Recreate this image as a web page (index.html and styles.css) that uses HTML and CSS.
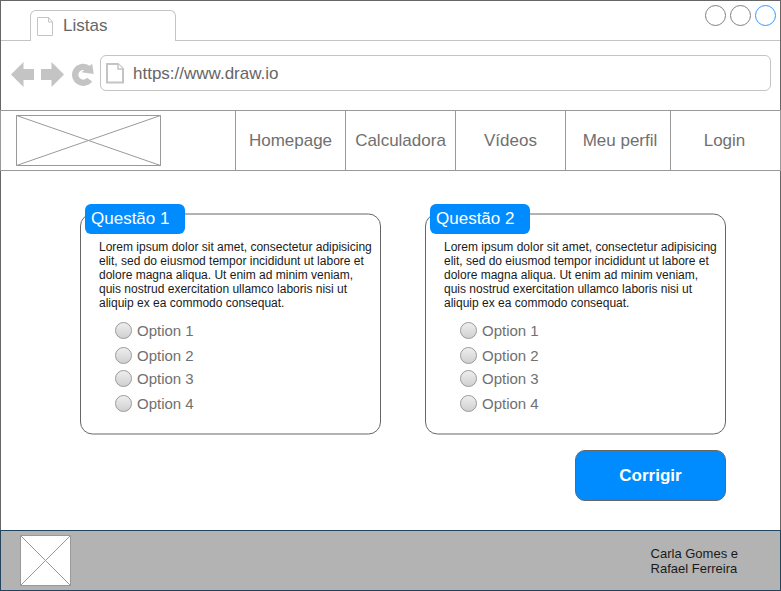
FILE: index.html
```html
<!DOCTYPE html>
<html lang="pt">
<head>
<meta charset="utf-8">
<title>Listas</title>
<link rel="stylesheet" href="styles.css">
</head>
<body>
<div class="window">
  <header class="chrome">
    <div class="tabstrip">
      <div class="tab">
        <svg class="tab-icon" width="17" height="20" viewBox="0 0 17 20" fill="#fff" stroke="#c4c4c4"><path d="M.5 .5h11l4 4.500v13.500h-15zM11.500 .5v4.500h4"/></svg>
        <span>Listas</span>
      </div>
      <div class="controls"><i class="dot"></i><i class="dot"></i><i class="dot active"></i></div>
    </div>
    <div class="toolbar">
      <svg class="arrows" width="86" height="30" viewBox="0 0 86 30" fill="#c4c4c4"><path d="M0 15.500 12.500 3v7H23v11H12.500v7zM53 15.500 40.500 3v7H30v11h10.500v7z"/><path d="M77.500 9.800A8 8 0 1 0 78.600 20.600" fill="none" stroke="#c4c4c4" stroke-width="6.300"/><path d="M81.200 4.800 82.700 15 70.500 13.200z"/></svg>
      <div class="address">
        <svg width="18" height="21" viewBox="0 0 18 21" fill="#fff" stroke="#c4c4c4" stroke-width="2"><path d="M1 1h11l5 5v13.500H1z"/><path d="M12 1v5h5" stroke-width="1.500"/></svg>
        <span>https://www.draw.io</span>
      </div>
    </div>
  </header>
  <nav class="nav">
    <div class="brand"><svg width="145" height="51" viewBox="0 0 145 51" fill="none" stroke="#999"><path d="M.5 .5h144v50H.5zL144.500 50.500M144.500 .5.5 50.500"/></svg></div>
    <a class="home">Homepage</a><a class="calc">Calculadora</a><a class="videos">Vídeos</a><a class="profile">Meu perfil</a><a class="login">Login</a>
  </nav>
  <main class="content">
    <div class="cards">
      <section class="card">
        <svg class="outline" width="301" height="222" viewBox="0 0 301 222" fill="#fff" stroke="#666"><rect x=".5" y="1" width="300" height="220" rx="12"/></svg>
        <h2>Questão 1</h2>
        <p>Lorem ipsum dolor sit amet, consectetur adipisicing<br>elit, sed do eiusmod tempor incididunt ut labore et<br>dolore magna aliqua. Ut enim ad minim veniam,<br>quis nostrud exercitation ullamco laboris nisi ut<br>aliquip ex ea commodo consequat.</p>
        <ul><li><i class="radio"></i>Option 1</li><li><i class="radio"></i>Option 2</li><li><i class="radio"></i>Option 3</li><li><i class="radio"></i>Option 4</li></ul>
      </section>
      <section class="card">
        <svg class="outline" width="301" height="222" viewBox="0 0 301 222" fill="#fff" stroke="#666"><rect x=".5" y="1" width="300" height="220" rx="12"/></svg>
        <h2>Questão 2</h2>
        <p>Lorem ipsum dolor sit amet, consectetur adipisicing<br>elit, sed do eiusmod tempor incididunt ut labore et<br>dolore magna aliqua. Ut enim ad minim veniam,<br>quis nostrud exercitation ullamco laboris nisi ut<br>aliquip ex ea commodo consequat.</p>
        <ul><li><i class="radio"></i>Option 1</li><li><i class="radio"></i>Option 2</li><li><i class="radio"></i>Option 3</li><li><i class="radio"></i>Option 4</li></ul>
      </section>
    </div>
    <button class="submit">Corrigir</button>
  </main>
  <footer class="footer">
    <svg width="51" height="51" viewBox="0 0 51 51" fill="#fff" stroke="#999"><path d="M.5 .5h50v50H.5zL50.500 50.500M50.500 .5.5 50.500"/></svg>
    <p>Carla Gomes e<br>Rafael Ferreira</p>
  </footer>
</div>
</body>
</html>
```
FILE: styles.css
```css
* { box-sizing: border-box; margin: 0; padding: 0; }
body { background: #fff; font-family: "Liberation Sans", Arial, sans-serif; color: #666; overflow: hidden; }
svg { display: block; flex: none; }
.window { width: 781px; height: 591px; display: flex; flex-direction: column; white-space: nowrap; }
.chrome { height: 110px; border: 1px solid #666; border-bottom: 0; }
.tabstrip { height: 40px; display: flex; justify-content: space-between; align-items: flex-start; border-bottom: 1px solid #c4c4c4; }
.tab { width: 146px; height: 31px; margin: 9px 0 0 29px; padding: 6px 0 0 6px; display: flex; gap: 9px; background: #fff; border: 1px solid #c4c4c4; border-bottom: 0; border-radius: 6px 6px 0 0; font-size: 17px; line-height: 18px; }
.controls { display: flex; gap: 4px; padding: 4px 4px 0 0; }
.dot { width: 21px; height: 21px; border: 1px solid #808080; border-radius: 50%; }
.dot.active { border-color: #3399ff; }
.toolbar { display: flex; padding: 14px 9px 0 10px; }
.arrows { margin: 4px 3px 0 0; }
.address { flex: 1; height: 36px; display: flex; align-items: center; gap: 9px; padding-left: 5px; border: 1px solid #c4c4c4; border-radius: 6px; font-size: 17px; }
.address span { padding-top: 2px; }
.nav { height: 61px; display: flex; border: 1px solid #999; color: #707070; font-size: 17px; }
.brand { width: 234px; padding: 4px 0 0 15px; }
.nav a { width: 110px; border-left: 1px solid #999; text-align: center; line-height: 59px; }
.nav .profile { width: 105px; padding-left: 4px; }
.nav .login { padding-right: 2px; }
.content { height: 359px; padding: 42px 54px 0 79px; border: solid #666; border-width: 0 1px; }
.cards { display: flex; gap: 44px; }
.card { position: relative; width: 301px; height: 222px; color: #1a1a1a; }
.outline { position: absolute; top: 0; left: 0; z-index: -1; }
.card h2 { width: 100px; height: 30px; margin: -9px 0 0 5px; padding-left: 6px; border-radius: 6px; background: #008cff; color: #fff; font-size: 17px; font-weight: normal; line-height: 29px; }
.card p { margin: 6px 0 0 19px; font-size: 12px; line-height: 14px; }
.card ul { list-style: none; margin: 12px 0 0 35px; display: grid; grid-template-rows: 25px 23px 25px 17px; color: #707070; font-size: 15px; }
.card li { display: flex; gap: 5px; height: 17px; line-height: 17px; }
.radio { width: 17px; height: 17px; border: 1px solid #999; border-radius: 50%; background: linear-gradient(#eee, #d0d0d0); }
.submit { display: block; width: 151px; height: 51px; margin: 15px 0 0 auto; border: 1px solid #666; border-radius: 10px; background: #008cff; color: #fff; font: bold 17px "Liberation Sans", Arial, sans-serif; }
.footer { height: 61px; display: flex; justify-content: space-between; padding: 4px 42px 0 19px; border: 1px solid #23445d; background: #b3b3b3; color: #1a1a1a; }
.footer p { margin-top: 11px; font-size: 13px; line-height: 15px; }
```
